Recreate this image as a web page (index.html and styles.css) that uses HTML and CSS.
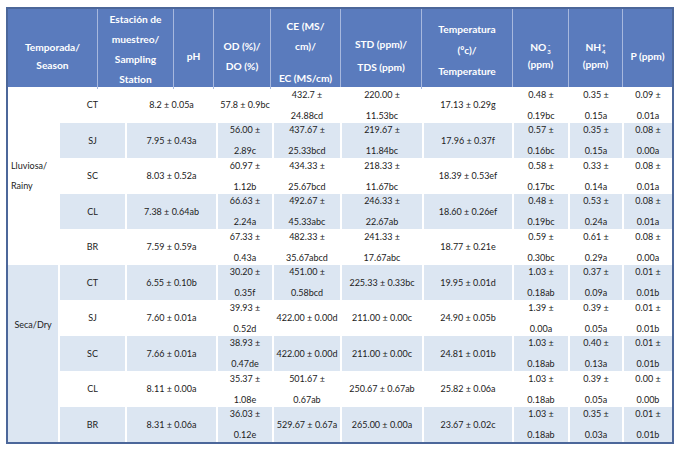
FILE: index.html
```html
<!DOCTYPE html>
<html lang="es">
<head>
<meta charset="utf-8">
<title>Tabla</title>
<link rel="stylesheet" href="styles.css">
</head>
<body>
<div class="table">
  <div class="head">
    <div class="hc lh18"><span>Temporada/</span><span>Season</span></div>
    <div class="hc hc-station"><span>Estación de</span><span>muestreo/</span><span>Sampling</span><span>Station</span></div>
    <div class="hc"><span>pH</span></div>
    <div class="hc"><span>OD (%)/</span><span>DO (%)</span></div>
    <div class="hc hc-ce"><span>CE (MS/</span><span>cm)/</span><span class="gap">EC (MS/cm)</span></div>
    <div class="hc lh23"><span>STD (ppm)/</span><span>TDS (ppm)</span></div>
    <div class="hc hc-temp"><span>Temperatura</span><span>(ºc)/</span><span>Temperature</span></div>
    <div class="hc lh17"><span class="ionline">NO<span class="ion"><span>-</span><span>3</span></span></span><span>(ppm)</span></div>
    <div class="hc lh17"><span class="ionline">NH<span class="ion"><span>+</span><span>4</span></span></span><span>(ppm)</span></div>
    <div class="hc"><span>P (ppm)</span></div>
  </div>
  <div class="body">
    <div class="season rainy"><span>Lluviosa/</span><span>Rainy</span></div>
    <div class="c">CT</div><div class="c">8.2 ± 0.05a</div><div class="c">57.8 ± 0.9bc</div><div class="c"><span>432.7 ±</span><span>24.88cd</span></div><div class="c"><span>220.00 ±</span><span>11.53bc</span></div><div class="c">17.13 ± 0.29g</div><div class="c"><span>0.48 ±</span><span>0.19bc</span></div><div class="c"><span>0.35 ±</span><span>0.15a</span></div><div class="c"><span>0.09 ±</span><span>0.01a</span></div>
    <div class="c b">SJ</div><div class="c b">7.95 ± 0.43a</div><div class="c b"><span>56.00 ±</span><span>2.89c</span></div><div class="c b"><span>437.67 ±</span><span>25.33bcd</span></div><div class="c b"><span>219.67 ±</span><span>11.84bc</span></div><div class="c b">17.96 ± 0.37f</div><div class="c b"><span>0.57 ±</span><span>0.16bc</span></div><div class="c b"><span>0.35 ±</span><span>0.15a</span></div><div class="c b"><span>0.08 ±</span><span>0.00a</span></div>
    <div class="c">SC</div><div class="c">8.03 ± 0.52a</div><div class="c"><span>60.97 ±</span><span>1.12b</span></div><div class="c"><span>434.33 ±</span><span>25.67bcd</span></div><div class="c"><span>218.33 ±</span><span>11.67bc</span></div><div class="c">18.39 ± 0.53ef</div><div class="c"><span>0.58 ±</span><span>0.17bc</span></div><div class="c"><span>0.33 ±</span><span>0.14a</span></div><div class="c"><span>0.08 ±</span><span>0.01a</span></div>
    <div class="c b">CL</div><div class="c b">7.38 ± 0.64ab</div><div class="c b"><span>66.63 ±</span><span>2.24a</span></div><div class="c b"><span>492.67 ±</span><span>45.33abc</span></div><div class="c b"><span>246.33 ±</span><span>22.67ab</span></div><div class="c b">18.60 ± 0.26ef</div><div class="c b"><span>0.48 ±</span><span>0.19bc</span></div><div class="c b"><span>0.53 ±</span><span>0.24a</span></div><div class="c b"><span>0.08 ±</span><span>0.01a</span></div>
    <div class="c">BR</div><div class="c">7.59 ± 0.59a</div><div class="c"><span>67.33 ±</span><span>0.43a</span></div><div class="c"><span>482.33 ±</span><span>35.67abcd</span></div><div class="c"><span>241.33 ±</span><span>17.67abc</span></div><div class="c">18.77 ± 0.21e</div><div class="c"><span>0.59 ±</span><span>0.30bc</span></div><div class="c"><span>0.61 ±</span><span>0.29a</span></div><div class="c"><span>0.08 ±</span><span>0.00a</span></div>

    <div class="season dry b"><span>Seca/Dry</span></div>
    <div class="c b">CT</div><div class="c b">6.55 ± 0.10b</div><div class="c b"><span>30.20 ±</span><span>0.35f</span></div><div class="c b"><span>451.00 ±</span><span>0.58bcd</span></div><div class="c b">225.33 ± 0.33bc</div><div class="c b">19.95 ± 0.01d</div><div class="c b"><span>1.03 ±</span><span>0.18ab</span></div><div class="c b"><span>0.37 ±</span><span>0.09a</span></div><div class="c b"><span>0.01 ±</span><span>0.01b</span></div>
    <div class="c">SJ</div><div class="c">7.60 ± 0.01a</div><div class="c"><span>39.93 ±</span><span>0.52d</span></div><div class="c">422.00 ± 0.00d</div><div class="c">211.00 ± 0.00c</div><div class="c">24.90 ± 0.05b</div><div class="c"><span>1.39 ±</span><span>0.00a</span></div><div class="c"><span>0.39 ±</span><span>0.05a</span></div><div class="c"><span>0.01 ±</span><span>0.01b</span></div>
    <div class="c b">SC</div><div class="c b">7.66 ± 0.01a</div><div class="c b"><span>38.93 ±</span><span>0.47de</span></div><div class="c b">422.00 ± 0.00d</div><div class="c b">211.00 ± 0.00c</div><div class="c b">24.81 ± 0.01b</div><div class="c b"><span>1.03 ±</span><span>0.18ab</span></div><div class="c b"><span>0.40 ±</span><span>0.13a</span></div><div class="c b"><span>0.01 ±</span><span>0.01b</span></div>
    <div class="c">CL</div><div class="c">8.11 ± 0.00a</div><div class="c"><span>35.37 ±</span><span>1.08e</span></div><div class="c"><span>501.67 ±</span><span>0.67ab</span></div><div class="c">250.67 ± 0.67ab</div><div class="c">25.82 ± 0.06a</div><div class="c"><span>1.03 ±</span><span>0.18ab</span></div><div class="c"><span>0.39 ±</span><span>0.05a</span></div><div class="c"><span>0.00 ±</span><span>0.00b</span></div>
    <div class="c b">BR</div><div class="c b">8.31 ± 0.06a</div><div class="c b"><span>36.03 ±</span><span>0.12e</span></div><div class="c b">529.67 ± 0.67a</div><div class="c b">265.00 ± 0.00a</div><div class="c b">23.67 ± 0.02c</div><div class="c b"><span>1.03 ±</span><span>0.18ab</span></div><div class="c b"><span>0.35 ±</span><span>0.03a</span></div><div class="c b"><span>0.01 ±</span><span>0.01b</span></div>
  </div>
</div>
</body>
</html>
```

FILE: styles.css
```css
html, body {
  margin: 0;
  background: #ffffff;
}

body {
  padding: 7px 0 0 6px;
  font-family: Lato, "Liberation Sans", sans-serif;
}

.table {
  width: 668px;
  box-sizing: border-box;
  border: 2px solid #4c679a;
}

.head {
  display: grid;
  grid-template-columns: 89px 76px 40px 57px 70px 81px 91px 56px 54px 50px;
  height: 78px;
  background: #5a7bbd;
  color: #ffffff;
  font-weight: 700;
  font-size: 10.2px;
}

.hc {
  display: flex;
  flex-direction: column;
  justify-content: center;
  align-items: center;
  text-align: center;
  box-sizing: border-box;
  padding-top: 14px;
  line-height: 20px;
  white-space: nowrap;
  border-left: 1px solid #a7b8de;
}

.hc:first-child {
  border-left: 0;
}

.lh18 { line-height: 18px; }
.lh23 { line-height: 23px; }
.lh17 { line-height: 17px; }

.hc-station {
  padding-top: 0;
}

.hc-temp {
  padding-top: 3px;
  line-height: 21px;
}

.hc-ce {
  padding-top: 6px;
}

.hc-ce .gap {
  margin-top: 12px;
}

.ionline {
  height: 17px;
}

.ion {
  display: inline-flex;
  flex-direction: column;
  align-items: center;
  font-size: 6px;
  line-height: 7.5px;
  vertical-align: 4.5px;
  margin-left: 1px;
}

.body {
  display: grid;
  grid-template-columns: 50px 67px 91px 56px 68px 82px 90px 56px 54px 50px;
  grid-template-rows: repeat(10, 35.5px);
  font-size: 9px;
  color: #222222;
}

.c {
  display: flex;
  flex-direction: column;
  justify-content: center;
  align-items: center;
  text-align: center;
  box-sizing: border-box;
  line-height: 21px;
  white-space: nowrap;
  border-left: 2px solid #ffffff;
}

.b {
  background: #dce6f2;
}

.season {
  grid-row: span 5;
  display: flex;
  flex-direction: column;
  justify-content: center;
  box-sizing: border-box;
  line-height: 20px;
  white-space: nowrap;
}

.rainy {
  align-items: flex-start;
  padding-left: 3px;
}

.dry {
  align-items: center;
  padding-bottom: 56px;
}
```
